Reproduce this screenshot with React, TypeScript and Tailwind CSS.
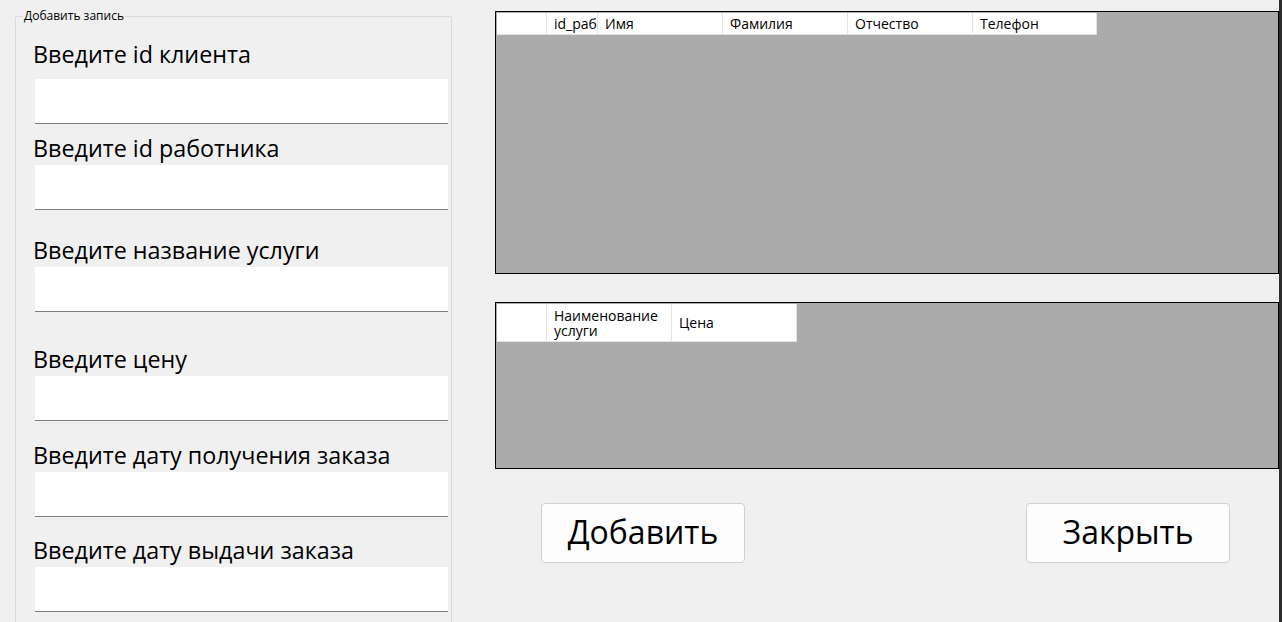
import React from "react";

const font = { fontFamily: '"Open Sans", "Noto Sans", sans-serif' };

interface Field {
  label: string;
  labelMt: string;
  inputMt: string;
}

const fields: Field[] = [
  { label: "Введите id клиента", labelMt: "mt-[17px]", inputMt: "mt-[11px]" },
  { label: "Введите id работника", labelMt: "mt-[10px]", inputMt: "mt-[3px]" },
  { label: "Введите название услуги", labelMt: "mt-[26px]", inputMt: "mt-[3px]" },
  { label: "Введите цену", labelMt: "mt-[33px]", inputMt: "mt-[3px]" },
  { label: "Введите дату получения заказа", labelMt: "mt-[20px]", inputMt: "mt-[3px]" },
  { label: "Введите дату выдачи заказа", labelMt: "mt-[19px]", inputMt: "mt-[3px]" },
];

function HeaderCell({ w, children }: { w: string; children?: React.ReactNode }) {
  return (
    <div className={`${w} shrink-0 border-r border-[#e3e3e3] pl-[7px] flex items-center overflow-hidden whitespace-nowrap`}>
      {children}
    </div>
  );
}

export default function App() {
  return (
    <div className="w-[1282px] h-[622px] bg-[#f0f0f0] flex overflow-hidden text-black" style={font}>
      {/* Left: group box */}
      <div className="w-[452px] shrink-0 pl-[15px]">
        <fieldset className="mt-[9px] w-[437px] h-[640px] border border-[#dadada] rounded-[2px] pl-[17px]">
          <legend className="-ml-[10px] px-[1px] text-[12px] leading-[14px]">Добавить запись</legend>
          {fields.map((f) => (
            <div key={f.label}>
              <div className={`${f.labelMt} text-[23.3px] leading-[28px] whitespace-nowrap`}>{f.label}</div>
              <div className={`${f.inputMt} ml-[2px] w-[413px] h-[45px] bg-white border-b border-[#7f7f7f]`} />
            </div>
          ))}
        </fieldset>
      </div>

      {/* Right: grids and buttons */}
      <div className="ml-[43px] w-[784px] shrink-0 pt-[11px] flex flex-col">
        <div className="h-[263px] border border-black bg-[#ababab] p-[1px]">
          <div className="flex h-[22px] bg-white border-b border-[#e3e3e3] text-[14px] w-[600px]">
            <HeaderCell w="w-[50px]" />
            <HeaderCell w="w-[51px]">id_раб</HeaderCell>
            <HeaderCell w="w-[125px]">Имя</HeaderCell>
            <HeaderCell w="w-[125px]">Фамилия</HeaderCell>
            <HeaderCell w="w-[125px]">Отчество</HeaderCell>
            <HeaderCell w="w-[124px]">Телефон</HeaderCell>
          </div>
        </div>

        <div className="mt-[28px] h-[167px] border border-black bg-[#ababab] p-[1px]">
          <div className="flex h-[38px] bg-white border-b border-[#e3e3e3] text-[14px] leading-[15px] w-[300px]">
            <HeaderCell w="w-[50px]" />
            <HeaderCell w="w-[125px]">
              <span className="whitespace-normal">Наименование услуги</span>
            </HeaderCell>
            <HeaderCell w="w-[125px]">Цена</HeaderCell>
          </div>
        </div>

        <div className="mt-[34px] flex justify-between pl-[46px] pr-[49px]">
          <button className="w-[204px] h-[60px] bg-[#fdfdfd] border border-[#d0d0d0] rounded-[4px] text-[32px] leading-none pb-[2px]">
            Добавить
          </button>
          <button className="w-[204px] h-[60px] bg-[#fdfdfd] border border-[#d0d0d0] rounded-[4px] text-[32px] leading-none pb-[2px]">
            Закрыть
          </button>
        </div>
      </div>

      <div className="w-[3px] shrink-0 bg-[#2b2b2b]" />
    </div>
  );
}
